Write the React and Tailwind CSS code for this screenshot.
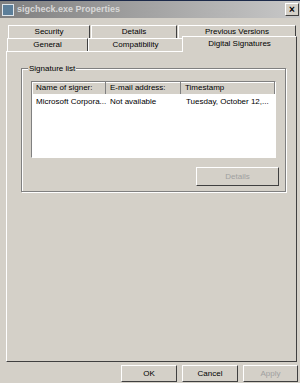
export default function App() {
  const font = { fontFamily: '"Liberation Sans", Arial, sans-serif' }
  return (
    <div className="relative h-[383px] w-[300px] overflow-hidden whitespace-nowrap bg-[#d4d0c8] text-[8px] text-black" style={font}>
      {/* title bar */}
      <div className="flex h-[18px] items-center border-t border-[#1c2a4a] bg-gradient-to-r from-[#808080] to-[#c8c8c8] pl-[2px] pr-[1px]">
        <div className="mr-[3px] h-[12px] w-[12px] border border-[#dfe6ec] bg-[#5c7f9a]" />
        <span className="text-[9px] font-bold text-[#d8d8d8]">sigcheck.exe Properties</span>
        <div className="ml-auto flex h-[13px] w-[14px] items-center justify-center border border-b-[#404040] border-l-white border-r-[#404040] border-t-white bg-[#d4d0c8] text-[10px] font-bold leading-none">
          ×
        </div>
      </div>

      {/* tabs */}
      <div className="relative mt-[7px] h-[26px]">
        <div className="absolute left-[8px] top-0 flex h-[13px] w-[82px] items-center justify-center border-l border-r border-t border-l-white border-r-[#404040] border-t-white">Security</div>
        <div className="absolute left-[91px] top-0 flex h-[13px] w-[86px] items-center justify-center border-l border-r border-t border-l-white border-r-[#404040] border-t-white">Details</div>
        <div className="absolute left-[178px] top-0 flex h-[13px] w-[118px] items-center justify-center border-l border-r border-t border-l-white border-r-[#404040] border-t-white">Previous Versions</div>
        <div className="absolute left-[7px] top-[13px] flex h-[13px] w-[81px] items-center justify-center border-l border-r border-t border-l-white border-r-[#404040] border-t-white">General</div>
        <div className="absolute left-[88px] top-[13px] flex h-[13px] w-[94px] items-center justify-center border-l border-t border-l-white border-t-white">Compatibility</div>
        <div className="absolute left-[182px] top-[11px] z-10 flex h-[16px] w-[115px] items-start justify-center border-l border-r border-t border-l-white border-r-[#404040] border-t-white bg-[#d4d0c8] pt-[1px]">Digital Signatures</div>
      </div>

      {/* panel */}
      <div className="ml-[6px] h-[311px] w-[291px] border border-b-[#404040] border-l-white border-r-[#404040] border-t-white pl-[14px] pr-[10px] pt-[16px]">
        <div className="relative h-[124px] border border-[#808080] px-[9px] pt-[12px] shadow-[inset_1px_1px_0_#fff,1px_1px_0_#fff]">
          <span className="absolute left-[6px] top-[-7px] bg-[#d4d0c8] px-[1px] leading-[13px]">Signature list</span>
          <div className="h-[77px] border border-b-white border-l-[#808080] border-r-white border-t-[#808080] bg-white">
            <div className="flex h-[12px] bg-[#d4d0c8] leading-[12px] shadow-[inset_1px_1px_0_#fff]">
              <div className="w-[74px] border-r border-[#808080] pl-[4px]">Name of signer:</div>
              <div className="w-[75px] border-r border-[#808080] pl-[4px]">E-mail address:</div>
              <div className="flex-1 border-r border-[#808080] pl-[4px]">Timestamp</div>
            </div>
            <div className="flex leading-[16px]">
              <div className="w-[74px] pl-[4px]">Microsoft Corpora...</div>
              <div className="w-[75px] pl-[4px]">Not available</div>
              <div className="flex-1 pl-[5px]">Tuesday, October 12,...</div>
            </div>
          </div>
          <div className="-mr-[3px] mt-[9px] flex justify-end">
            <div className="flex h-[19px] w-[83px] items-center justify-center border border-b-[#404040] border-l-white border-r-[#404040] border-t-white text-[#a0a0a0]">Details</div>
          </div>
        </div>
      </div>

      {/* buttons */}
      <div className="mt-[3px] flex justify-end gap-[5px] pr-[2px]">
        <div className="flex h-[17px] w-[56px] items-center justify-center border border-b-[#404040] border-l-white border-r-[#404040] border-t-white">OK</div>
        <div className="flex h-[17px] w-[56px] items-center justify-center border border-b-[#404040] border-l-white border-r-[#404040] border-t-white">Cancel</div>
        <div className="flex h-[17px] w-[55px] items-center justify-center border border-b-[#404040] border-l-white border-r-[#404040] border-t-white text-[#a0a0a0]">Apply</div>
      </div>
    </div>
  )
}
